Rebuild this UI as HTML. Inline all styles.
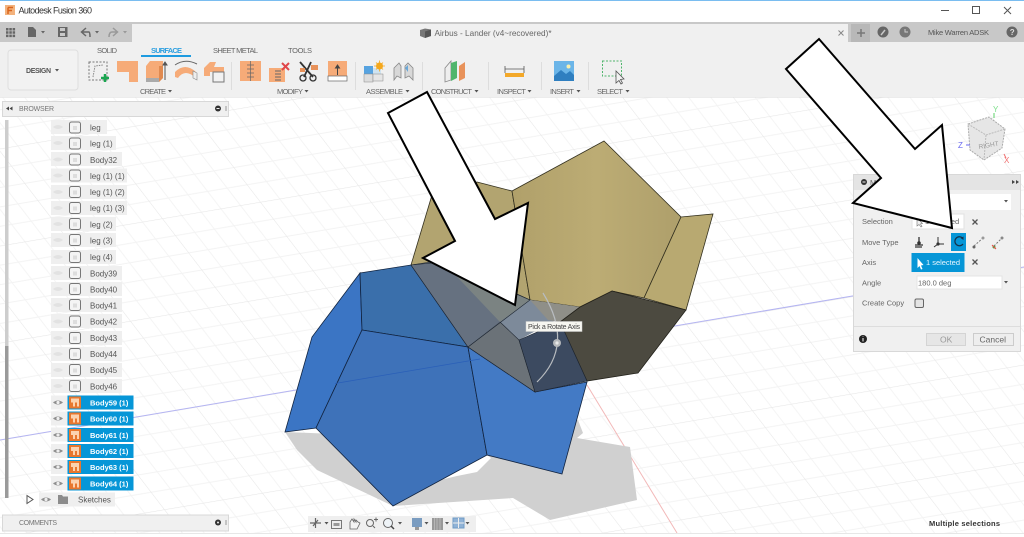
<!DOCTYPE html>
<html><head><meta charset="utf-8"><title>Autodesk Fusion 360</title>
<style>
html,body{margin:0;padding:0;background:#fff;width:1024px;height:537px;overflow:hidden}
svg{display:block;position:absolute;left:0;top:0;filter:blur(.3px)}
text{font-family:"Liberation Sans",sans-serif;fill:#666}
.t{font-size:7.5px}
.b{font-size:8px;fill:#555}
.w{font-size:7.5px;fill:#fff;font-weight:bold}
.l{font-size:7.5px;fill:#666}
.o{fill:#f6ab78}
</style></head><body>
<svg width="1024" height="537" viewBox="0 0 1024 537" xmlns="http://www.w3.org/2000/svg">
<defs>
<pattern id="g" patternUnits="userSpaceOnUse" width="100" height="100" patternTransform="matrix(.98 -.165 .66 .86 0 440)">
<path d="M20 0V100M40 0V100M60 0V100M80 0V100M0 20H100M0 40H100M0 60H100M0 80H100" stroke="#f3f3f3" stroke-width="1" fill="none"/>
<path d="M0 0V100M0 0H100" stroke="#e6e6e6" stroke-width="1.200" fill="none"/>
</pattern>
<linearGradient id="tan" x1="0" y1="0" x2="1" y2="0"><stop offset="0" stop-color="#b0a06a"/><stop offset=".5" stop-color="#bcac74"/><stop offset="1" stop-color="#ae9f6b"/></linearGradient>
<g id="eye"><path d="M-5 0Q0-4 5 0Q0 4-5 0Z" fill="#8e8e8e"/><circle r="1.600" fill="#eee"/></g>
<g id="ef"><path d="M-5 0Q0-4 5 0Q0 4-5 0Z" fill="#e2e2e2"/></g>
<g id="bx"><rect x="-5.500" y="-5.500" width="11" height="11" rx="2" fill="#f4f4f4" stroke="#777" stroke-width="1"/><rect x="-2" y="-1.500" width="4" height="4" fill="#ddd"/></g>
<g id="bs"><rect x="-6" y="-6" width="12" height="12" fill="#e8772e"/><path d="M-4-4H4V4H2V0H0V4H-2V0H-4Z" fill="#fbd3b0"/></g>
</defs>

<!-- viewport -->
<rect x="0" y="97" width="1024" height="440" fill="#fff"/>
<rect x="0" y="97" width="1024" height="436" fill="url(#g)"/>
<path d="M0 440L1024 267" stroke="#b4b4f2" stroke-width="1"/>
<path d="M587 385L677 533" stroke="#f2b8b8" stroke-width="1"/>

<!-- shadow -->
<path d="M285 432L297 450L317 470L393 506L513 498L550 520L637 500L630 447L577 438L583 433L578 420L487 440Z" fill="#d0d0d0"/>
<path d="M487 455L491 458L477 472L457 476L440 480L470 455Z" fill="#fff"/>

<!-- tan -->
<path d="M477 182L512 191L530 300L480 340L411 265L432 195Z" fill="#b2a470" stroke="#33301f" stroke-width=".8"/>
<path d="M512 191L604 141L681 217L644 298L612 291L580 307L530 300Z" fill="url(#tan)" stroke="#33301f" stroke-width=".8"/>
<path d="M681 217L713 214L686 310L644 298Z" fill="#b8a971" stroke="#33301f" stroke-width=".8"/>
<!-- translucent strip -->
<path d="M411 265L443 260L530 300L468 347Z" fill="#667280" stroke="#1d2530" stroke-width=".6"/>
<path d="M443 262L530 300L500 322Z" fill="#9c9f85"/>
<path d="M500 322L530 300L580 307L519 340Z" fill="#7d8a9a"/>
<path d="M530 300L580 307L560 322L548 320Z" fill="#8f8f88"/>
<!-- blue -->
<path d="M360 273L312 337L285 432L316 428L362 330Z" fill="#3b75c4" stroke="#11233f" stroke-width=".8"/>
<path d="M360 273L411 265L468 347L362 330Z" fill="#3a6fab" stroke="#11233f" stroke-width=".8"/>
<path d="M362 330L468 347L487 455L393 506L316 428Z" fill="#3e72b9" stroke="#11233f" stroke-width=".8"/>
<path d="M468 347L535 392L587 382L562 474L487 455Z" fill="#437ac5" stroke="#11233f" stroke-width=".8"/>
<path d="M335 383.500L480 359" stroke="#2a5fb8" stroke-width=".8"/>
<path d="M411 265L468 347L500 322Z" fill="#667280"/>
<path d="M468 347L500 322L519 340L535 392Z" fill="#6b7278" stroke="#1d2530" stroke-width=".6"/>
<path d="M443 262L411 265L468 347L530 300Z" fill="#667280" fill-opacity=".6" stroke="#1d2530" stroke-width=".6"/>
<!-- dark brown -->
<path d="M612 291L686 310L638 373L587 381L560 322L580 307Z" fill="#4c4a40" stroke="#22211a" stroke-width=".8"/>
<path d="M519 340L560 322L587 381L535 392Z" fill="#3c4a60" stroke="#1d2530" stroke-width=".6"/>
<!-- arc & handle -->
<path d="M537 382Q575 345 543 293" stroke="#b8bcc0" stroke-width="1.200" fill="none"/>
<circle cx="557" cy="343" r="4" fill="#b5b8bb"/><circle cx="557" cy="343" r="1.600" fill="#e8e8e8"/>
<rect x="526" y="321.500" width="56" height="10" fill="#f6f6f0" stroke="#ccc" stroke-width=".5"/>
<text x="528" y="329" font-size="7" style="fill:#444" textLength="52">Pick a Rotate Axis</text>

<!-- title bar -->
<rect width="1024" height="22" fill="#fff"/>
<rect width="1024" height="1" fill="#7abdf0"/>
<rect x="5" y="5" width="10" height="10" fill="#f3b27c"/>
<path d="M8 7.500H13M8 7.500V14M8 10.500H12" stroke="#d9641c" stroke-width="1.500" fill="none"/>
<text x="18.500" y="13.500" font-size="9" style="fill:#333" textLength="73.500">Autodesk Fusion 360</text>
<path d="M941 10.500H949" stroke="#555"/>
<rect x="972.500" y="6.500" width="7" height="7" fill="none" stroke="#555"/>
<path d="M1004 7L1011 14M1011 7L1004 14" stroke="#555"/>

<!-- tabs bar -->
<rect y="22" width="1024" height="20" fill="#c8c8c8"/>
<rect x="132" y="24" width="716" height="18" fill="#f0f0f0"/>
<rect y="42" width="1024" height="55" fill="#f0f0f0"/>
<rect y="97" width="1024" height=".6" fill="#e0e0e0"/>
<!-- qat -->
<g fill="#666">
<path d="M6 28h2.500v2.500H6zM9.300 28h2.500v2.500H9.300zM12.600 28h2.500v2.500h-2.500zM6 31.300h2.500v2.500H6zM9.300 31.300h2.500v2.500H9.300zM12.600 31.300h2.500v2.500h-2.500zM6 34.600h2.500v2.500H6zM9.300 34.600h2.500v2.500H9.300zM12.600 34.600h2.500v2.500h-2.500z"/>
<path d="M28 27h5l3 3v7h-8z"/><path d="M41 31h4l-2 2.500z"/>
<path d="M58 27h9.500v10H58z"/>
</g>
<rect x="60" y="28" width="5" height="3" fill="#c8c8c8"/><rect x="60" y="33" width="5" height="3" fill="#c8c8c8"/>
<path d="M86 28L81.500 32L86 36M82 32H89Q90 32 90 37" fill="none" stroke="#666" stroke-width="1.500"/>
<path d="M95 31h4l-2 2.500z" fill="#666"/>
<path d="M113 28L117.500 32L113 36M117 32H112Q109 32 109 37" fill="none" stroke="#999" stroke-width="1.500"/>
<path d="M123 31h4l-2 2.500z" fill="#999"/>
<!-- doc title -->
<path d="M420 30L425 28.500L431 29.500V36L425 38L420 36Z" fill="#777"/><path d="M425 31.500L431 29.500V36L425 38Z" fill="#555"/>
<text x="434.500" y="36" font-size="8.200" style="fill:#666" textLength="117">Airbus - Lander (v4~recovered)*</text>
<path d="M838.500 30.500L843.500 35.500M843.500 30.500L838.500 35.500" stroke="#888"/>
<rect x="851" y="24" width="19" height="18" fill="#b8b8b8"/>
<path d="M857 33H865M861 29V37" stroke="#777" stroke-width="1.500"/>
<circle cx="883" cy="32" r="5.500" fill="#666"/><path d="M881 35L885 30" stroke="#c8c8c8" stroke-width="1.500"/><circle cx="905" cy="32" r="5.500" fill="#777"/><path d="M905 29V32H908" stroke="#ccc" fill="none"/>
<text x="928" y="35" font-size="7.500" style="fill:#555" textLength="61">Mike Warren ADSK</text>
<circle cx="1012" cy="32" r="5.500" fill="#666"/><text x="1009.800" y="35" font-size="8" font-weight="bold" style="fill:#ddd">?</text>

<!-- ribbon -->
<rect x="8" y="50" width="70" height="40" rx="3" fill="#f2f2f2" stroke="#dedede"/>
<text x="26" y="73" font-size="7" font-weight="bold" style="fill:#555" textLength="25">DESIGN</text>
<path d="M55 69h4l-2 2.500z" fill="#555"/>
<text x="97" y="53" class="t" textLength="20">SOLID</text>
<text x="151" y="53" class="t" font-weight="bold" style="fill:#2fa0e0" textLength="31">SURFACE</text>
<rect x="141" y="55" width="50" height="2" fill="#1e9be0"/>
<text x="213" y="53" class="t" textLength="45">SHEET METAL</text>
<text x="288" y="53" class="t" textLength="24">TOOLS</text>
<!-- create icons -->
<rect x="89" y="62" width="18" height="18" fill="none" stroke="#777" stroke-dasharray="2 1.500"/>
<path d="M93 77L95 66L103 65" fill="none" stroke="#888" stroke-dasharray="1.500 1"/>
<path d="M101 78h8M105 74v8" stroke="#1aa650" stroke-width="2.500"/>
<path d="M117 61H138V82H129V72H117Z" class="o" fill="#f6ab78"/>
<path d="M146 66L150 61H163V78L159 82H146Z" fill="#f6ab78"/><path d="M146 78H159V82H146Z" fill="#aaa"/><path d="M159 66H163V78L159 82Z" fill="#e08a50"/>
<path d="M165 80V63M165 62L163 65H167Z" stroke="#555" fill="#555"/>
<path d="M175 72Q185 62 196 72V78Q185 68 178 78L175 77Z" fill="#f6ab78"/><path d="M175 65Q185 58 197 64" fill="none" stroke="#666"/><path d="M193 71L197 73V80L193 78Z" fill="#eee" stroke="#888" stroke-width=".6"/>
<path d="M204 68L210 62H216L214 67L224 67V72H210V76H204Z" fill="#f6ab78"/>
<rect x="213" y="72" width="11" height="10" fill="#f2f2f2" stroke="#777"/>
<path d="M231.500 62V90" stroke="#ddd"/>
<text x="140" y="94" class="l" textLength="26">CREATE</text><path d="M168 90h4l-2 2.500z" fill="#555"/>
<!-- modify icons -->
<rect x="240" y="61" width="21" height="20" fill="#f6ab78"/><path d="M250.500 61V81M247 65H254M247 69H254M247 73H254M247 77H254" stroke="#666" stroke-width=".7"/>
<rect x="269" y="68" width="16" height="14" fill="#f6ab78"/><path d="M275 71H281M275 74H281M275 77H281M275 80H281" stroke="#666"/>
<path d="M282 63L289 70M289 63L282 70" stroke="#e0474a" stroke-width="2"/>
<path d="M300 62L313 77M311 62L304 77" stroke="#333" stroke-width="1.800"/><circle cx="303" cy="78" r="3" fill="none" stroke="#333" stroke-width="1.300"/><circle cx="313" cy="78" r="3" fill="none" stroke="#333" stroke-width="1.300"/><rect x="300" y="68" width="5" height="4" fill="#e8925a"/><rect x="311" y="65" width="7" height="5" fill="#e8925a"/>
<rect x="328" y="61" width="19" height="15" fill="#f6ab78"/><rect x="328" y="76" width="19" height="5" fill="#fff" stroke="#666" stroke-width=".7"/><path d="M337.500 75V66M335.500 68L337.500 65L339.500 68Z" stroke="#444" fill="#444"/>
<path d="M355.500 62V90" stroke="#ddd"/>
<text x="277" y="94" class="l" textLength="26">MODIFY</text><path d="M304.500 90h4l-2 2.500z" fill="#555"/>
<!-- assemble -->
<rect x="364" y="66" width="9" height="8" fill="#57a3e0"/><rect x="373" y="68" width="8" height="7" fill="#cfe3f0"/><rect x="364" y="74" width="9" height="8" fill="#ddd" stroke="#888" stroke-width=".5"/><rect x="373" y="74" width="10" height="7" fill="#e6e6e6" stroke="#888" stroke-width=".5"/>
<circle cx="379.500" cy="66" r="3.500" fill="#f5a81c"/><path d="M379.500 60.500v11M374 66h11M376 62.500l7 7M383 62.500l-7 7" stroke="#f5a81c" stroke-width=".8"/>
<path d="M394 80V68L399 63L401 66V78L397 76Z" fill="#d8d8d8" stroke="#888" stroke-width=".8"/><path d="M413 80V68L408 63L405 66V78L409 76Z" fill="#d8d8d8" stroke="#888" stroke-width=".8"/><path d="M405 68L408 65V72Z" fill="#6aa8d8"/>
<path d="M422.500 62V90" stroke="#ddd"/>
<text x="366" y="94" class="l" textLength="37">ASSEMBLE</text><path d="M405.500 90h4l-2 2.500z" fill="#555"/>
<!-- construct -->
<path d="M445 68L451 61V80L445 82Z" fill="#eee" stroke="#888" stroke-width=".8"/><path d="M451 63L457 61V78L451 81Z" fill="#4fb56c"/><path d="M459 66L465 62V78L459 81Z" fill="#e8925a"/>
<path d="M488.500 62V90" stroke="#ddd"/>
<text x="431" y="94" class="l" textLength="41">CONSTRUCT</text><path d="M474.500 90h4l-2 2.500z" fill="#555"/>
<!-- inspect -->
<rect x="505" y="73" width="19" height="4" fill="#f3a829"/><path d="M505 66V73M524 66V73M505 69H524" stroke="#555" stroke-width=".8"/>
<path d="M541.500 62V90" stroke="#ddd"/>
<text x="497" y="94" class="l" textLength="29">INSPECT</text><path d="M527.500 90h4l-2 2.500z" fill="#555"/>
<!-- insert -->
<rect x="554" y="61" width="20" height="20" fill="#6bb5e8"/><path d="M554 76L561 70L566 74L570 71L574 75V81H554Z" fill="#2f7fc0"/><circle cx="568.500" cy="66.500" r="2" fill="#f8f0b0"/>
<path d="M588.500 62V90" stroke="#ddd"/>
<text x="550" y="94" class="l" textLength="24">INSERT</text><path d="M576.500 90h4l-2 2.500z" fill="#555"/>
<!-- select -->
<rect x="602.500" y="61" width="19" height="15" fill="none" stroke="#4fb56c" stroke-dasharray="2 1.500"/>
<path d="M616 71V83L619 80.500L621 84L622.500 83L620.500 79.500L624 79Z" fill="#f2f2f2" stroke="#555" stroke-width=".8"/>
<text x="597" y="94" class="l" textLength="26">SELECT</text><path d="M625.500 90h4l-2 2.500z" fill="#555"/>

<!-- browser -->
<rect x="2.500" y="101.500" width="226" height="15" fill="#f0f0f0" stroke="#d8d8d8"/>
<path d="M6 108.500L9 106.500V110.500ZM9.500 108.500L12.500 106.500V110.500Z" fill="#444"/>
<text x="19" y="111" font-size="7" style="fill:#777" textLength="35">BROWSER</text>
<circle cx="218" cy="108.500" r="3" fill="#333"/><path d="M216.500 108.500H219.500" stroke="#eee"/>
<path d="M226 106V111" stroke="#999"/>
<rect x="5" y="120" width="3.500" height="226" fill="#cdcdcd"/><rect x="5" y="346" width="3.500" height="152" fill="#9a9a9a"/>

<g fill="#efefef">
<rect x="51" y="120" width="56" height="14"/><rect x="51" y="136" width="65" height="14"/><rect x="51" y="152" width="71" height="14"/><rect x="51" y="168.500" width="76" height="14"/><rect x="51" y="185" width="76" height="14"/><rect x="51" y="201" width="76" height="14"/><rect x="51" y="217" width="65" height="14"/><rect x="51" y="233" width="65" height="14"/><rect x="51" y="250" width="65" height="14"/>
<rect x="51" y="266" width="71" height="14"/><rect x="51" y="282" width="71" height="14"/><rect x="51" y="298" width="71" height="14"/><rect x="51" y="314" width="71" height="14"/><rect x="51" y="331" width="71" height="14"/><rect x="51" y="347" width="71" height="14"/><rect x="51" y="363" width="71" height="14"/><rect x="51" y="379" width="71" height="14"/>
<rect x="51" y="395.500" width="17" height="14"/><rect x="51" y="411.500" width="17" height="14"/><rect x="51" y="427.500" width="17" height="14"/><rect x="51" y="444" width="17" height="14"/><rect x="51" y="460" width="17" height="14"/><rect x="51" y="476" width="17" height="14"/>
<rect x="39" y="492.500" width="76" height="14"/>
</g>
<use href="#ef" x="58" y="127"/><use href="#bx" x="75" y="127.500"/><text x="90" y="130.500" class="b">leg</text>
<use href="#ef" x="58" y="143"/><use href="#bx" x="75" y="143.500"/><text x="90" y="146.500" class="b">leg (1)</text>
<use href="#ef" x="58" y="159.500"/><use href="#bx" x="75" y="159.500"/><text x="90" y="163" class="b">Body32</text>
<use href="#ef" x="58" y="175.500"/><use href="#bx" x="75" y="175.500"/><text x="90" y="179" class="b">leg (1) (1)</text>
<use href="#ef" x="58" y="192"/><use href="#bx" x="75" y="192"/><text x="90" y="195" class="b">leg (1) (2)</text>
<use href="#ef" x="58" y="208"/><use href="#bx" x="75" y="208"/><text x="90" y="211" class="b">leg (1) (3)</text>
<use href="#ef" x="58" y="224"/><use href="#bx" x="75" y="224"/><text x="90" y="227.500" class="b">leg (2)</text>
<use href="#ef" x="58" y="240"/><use href="#bx" x="75" y="240"/><text x="90" y="243.500" class="b">leg (3)</text>
<use href="#ef" x="58" y="257"/><use href="#bx" x="75" y="257"/><text x="90" y="260" class="b">leg (4)</text>
<use href="#ef" x="58" y="273"/><use href="#bx" x="75" y="273"/><text x="90" y="276.500" class="b">Body39</text>
<use href="#ef" x="58" y="289"/><use href="#bx" x="75" y="289"/><text x="90" y="292.500" class="b">Body40</text>
<use href="#ef" x="58" y="305"/><use href="#bx" x="75" y="305"/><text x="90" y="308.500" class="b">Body41</text>
<use href="#ef" x="58" y="321.500"/><use href="#bx" x="75" y="321.500"/><text x="90" y="324.500" class="b">Body42</text>
<use href="#ef" x="58" y="338"/><use href="#bx" x="75" y="338"/><text x="90" y="341" class="b">Body43</text>
<use href="#ef" x="58" y="354"/><use href="#bx" x="75" y="354"/><text x="90" y="357" class="b">Body44</text>
<use href="#ef" x="58" y="370"/><use href="#bx" x="75" y="370"/><text x="90" y="373" class="b">Body45</text>
<use href="#ef" x="58" y="386"/><use href="#bx" x="75" y="386"/><text x="90" y="389.500" class="b">Body46</text>
<g fill="#0696d7">
<rect x="67.500" y="395.500" width="66" height="14"/><rect x="67.500" y="411.500" width="66" height="14"/><rect x="67.500" y="428" width="66" height="14"/><rect x="67.500" y="444" width="66" height="14"/><rect x="67.500" y="460" width="66" height="14"/><rect x="67.500" y="476.500" width="66" height="14"/>
</g>
<use href="#eye" x="58" y="402.500"/><use href="#bs" x="75" y="402.500"/><text x="90" y="405.500" class="w">Body59 (1)</text>
<use href="#eye" x="58" y="418.500"/><use href="#bs" x="75" y="418.500"/><text x="90" y="421.500" class="w">Body60 (1)</text>
<use href="#eye" x="58" y="435"/><use href="#bs" x="75" y="435"/><text x="90" y="438" class="w">Body61 (1)</text>
<use href="#eye" x="58" y="451"/><use href="#bs" x="75" y="451"/><text x="90" y="454" class="w">Body62 (1)</text>
<use href="#eye" x="58" y="467"/><use href="#bs" x="75" y="467"/><text x="90" y="470" class="w">Body63 (1)</text>
<use href="#eye" x="58" y="483.500"/><use href="#bs" x="75" y="483.500"/><text x="90" y="486.500" class="w">Body64 (1)</text>
<path d="M27 495.500L33 499.500L27 503.500Z" fill="#fff" stroke="#555"/>
<use href="#eye" x="46" y="499.500"/>
<path d="M58 495H62L63 496.500H68V504H58Z" fill="#8c8c8c"/>
<text x="78" y="502.500" class="b">Sketches</text>

<!-- comments -->
<rect x="2.500" y="515" width="226" height="16" fill="#f0f0f0" stroke="#d8d8d8"/>
<text x="19" y="525" font-size="7" style="fill:#777" textLength="38">COMMENTS</text>
<circle cx="218" cy="522.500" r="3" fill="#333"/><circle cx="218" cy="522.500" r="1" fill="#eee"/>
<path d="M226 520V525" stroke="#999"/>
<rect y="533" width="1024" height="4" fill="#fff"/><rect y="533" width="1024" height=".7" fill="#ddd"/>

<!-- nav toolbar -->
<rect x="308" y="516" width="168" height="16" fill="#efefef"/>
<path d="M310 523H321M315.500 518V528M313 526L318 520" stroke="#666" stroke-width="1.200"/>
<path d="M324.500 522h4l-2 2.500z" fill="#555"/>
<rect x="331.500" y="520.500" width="10" height="8" fill="#eee" stroke="#777"/><rect x="333.500" y="523" width="6" height="3" fill="#999"/>
<path d="M350 529V522L352 519L354 522V519L356 522V520L358 522L360 523L357 529Z" fill="#f4f4f4" stroke="#666" stroke-width=".8"/>
<circle cx="370" cy="523" r="3.500" fill="none" stroke="#666"/><path d="M373 526L375 528M374 519.500h4M376 517.500v4" stroke="#666"/>
<circle cx="388" cy="523" r="4.500" fill="#eef3f7" stroke="#666"/><path d="M391 526L394 529" stroke="#444" stroke-width="1.500"/>
<path d="M398 522h4l-2 2.500z" fill="#555"/>
<rect x="412" y="518" width="10" height="9" fill="#7a9cc0"/><path d="M415 527V530H419V527" fill="#999"/>
<path d="M424.500 522h4l-2 2.500z" fill="#555"/>
<rect x="432" y="518" width="11" height="12" fill="#999"/><path d="M434.500 518V530M437 518V530M440 518V530" stroke="#c4c4c4" stroke-width=".7"/>
<path d="M445 522h4l-2 2.500z" fill="#555"/>
<rect x="453" y="518" width="11" height="10" fill="#8fb2d6" stroke="#6f9bc6"/><path d="M458.500 518V528M453 523H464" stroke="#eee"/>
<path d="M465.500 522h4l-2 2.500z" fill="#555"/>
<text x="929" y="526" font-size="7.500" font-weight="bold" style="fill:#333" textLength="71">Multiple selections</text>

<!-- viewcube -->
<text x="993" y="112" font-size="8" style="fill:#7ce08a">Y</text>
<path d="M994 113V118" stroke="#5cd06a"/>
<path d="M968 124L989 117L1005 129L1002 148L984 160L970 150Z" fill="#e6e6e6" stroke="#aaa" stroke-dasharray="2 1"/>
<path d="M968 124L986 135L1005 129M986 135L984 160" fill="none" stroke="#bbb" stroke-dasharray="2 1"/>
<text x="979" y="149" font-size="6.500" style="fill:#999" transform="rotate(-10 979 149)">RIGHT</text>
<text x="958" y="148" font-size="8" style="fill:#6a6af0">Z</text><path d="M966 145H970" stroke="#6a6af0"/>
<text x="1004" y="163" font-size="8" style="fill:#f07070">X</text><path d="M1004 154L1006 158" stroke="#f07070"/>

<!-- dialog -->
<rect x="853.500" y="174.500" width="167" height="177" fill="#f0f0f0" stroke="#d8d8d8"/>
<rect x="854" y="175" width="166" height="15" fill="#e4e4e4"/>
<circle cx="864" cy="182" r="3" fill="#333"/><path d="M862.500 182H865.500" stroke="#eee"/>
<path d="M1012 180L1015 182L1012 184ZM1016 180L1019 182L1016 184Z" fill="#444"/>
<text x="870" y="185" font-size="7.500" style="fill:#666">M</text>
<rect x="870" y="194" width="141" height="16" fill="#fff"/>
<path d="M1004 200h4l-2 2.500z" fill="#555"/>
<text x="862" y="224" class="l">Selection</text>
<rect x="912" y="214" width="52" height="15" fill="#fff" stroke="#e2e2e2"/>
<path d="M917 218V226L919 224.500L921 227L922 226.500L920.500 224L922.500 223.500Z" fill="#eee" stroke="#777" stroke-width=".6"/>
<text x="925" y="224" class="l">1 selected</text>
<path d="M972.500 219.500L977.500 224.500M977.500 219.500L972.500 224.500" stroke="#555" stroke-width="1.300"/>
<text x="862" y="245" class="l">Move Type</text>
<path d="M915 245H923M919 237V245M915 247H922" stroke="#333" stroke-width="1.300"/><circle cx="919" cy="243" r="1.800" fill="#333"/>
<path d="M938 237V244H944M934 247L938 244" stroke="#333" stroke-width="1" fill="none"/><circle cx="938" cy="244" r="1.600" fill="#333"/>
<rect x="951" y="233" width="15" height="18" fill="#0696d7"/>
<path d="M962.500 238A4.500 4.500 0 1 0 963 244" fill="none" stroke="#15324a" stroke-width="1.200"/><path d="M960.500 238L963.500 236.500V240Z" fill="#15324a"/>
<path d="M974 246L984 237" stroke="#777" stroke-dasharray="2 1.500"/><circle cx="974" cy="247" r="1.500" fill="#666"/><circle cx="983" cy="238" r="1.500" fill="#999"/>
<path d="M994 246L1003 237" stroke="#777" stroke-dasharray="2 1.500"/><circle cx="994" cy="247" r="1.500" fill="#4a4"/><circle cx="1002" cy="238" r="1.500" fill="#888"/><path d="M992 245L996 249" stroke="#e44"/>
<text x="862" y="265" class="l">Axis</text>
<rect x="911.500" y="253" width="53" height="19" fill="#0696d7"/>
<path d="M917.500 258V268L919.500 266L921 269.500L922.500 269L921 265.500L923.500 265Z" fill="#fff"/>
<text x="926" y="265" font-size="7.500" style="fill:#e8f6ff" textLength="34">1 selected</text>
<path d="M972.500 259.500L977.500 264.500M977.500 259.500L972.500 264.500" stroke="#555" stroke-width="1.300"/>
<text x="862" y="285.500" class="l">Angle</text>
<rect x="917" y="276" width="85" height="13" fill="#fff" stroke="#e4e4e4"/>
<text x="918" y="285.500" class="l">180.0 deg</text>
<path d="M1004 281h4l-2 2.500z" fill="#555"/>
<text x="862" y="305.500" class="l">Create Copy</text>
<rect x="915" y="299" width="8.500" height="8.500" rx="1.500" fill="#e4e4e4" stroke="#666"/>
<path d="M854 326.500H1020" stroke="#ddd"/>
<circle cx="863" cy="339" r="4" fill="#222"/><path d="M863 338V341.500M863 336.500V337" stroke="#fff"/>
<rect x="926.500" y="333.500" width="39" height="12" fill="#e6e6e6" stroke="#d4d4d4"/>
<text x="940" y="342.500" font-size="8.500" style="fill:#999">OK</text>
<rect x="973.500" y="333.500" width="40" height="12" fill="#eee" stroke="#ccc"/>
<text x="979.500" y="342.500" font-size="8.500" style="fill:#666">Cancel</text>

<!-- arrows -->
<path d="M427 92L495 219L528 203L515 305L423 258L455 241L388 113Z" fill="#fff" stroke="#000" stroke-width="2" stroke-linejoin="miter"/>
<path d="M819 39L915 149L942 125L952 228L853 203L881 178L786 69Z" fill="#fff" stroke="#000" stroke-width="2" stroke-linejoin="miter"/>
</svg>
</body></html>
